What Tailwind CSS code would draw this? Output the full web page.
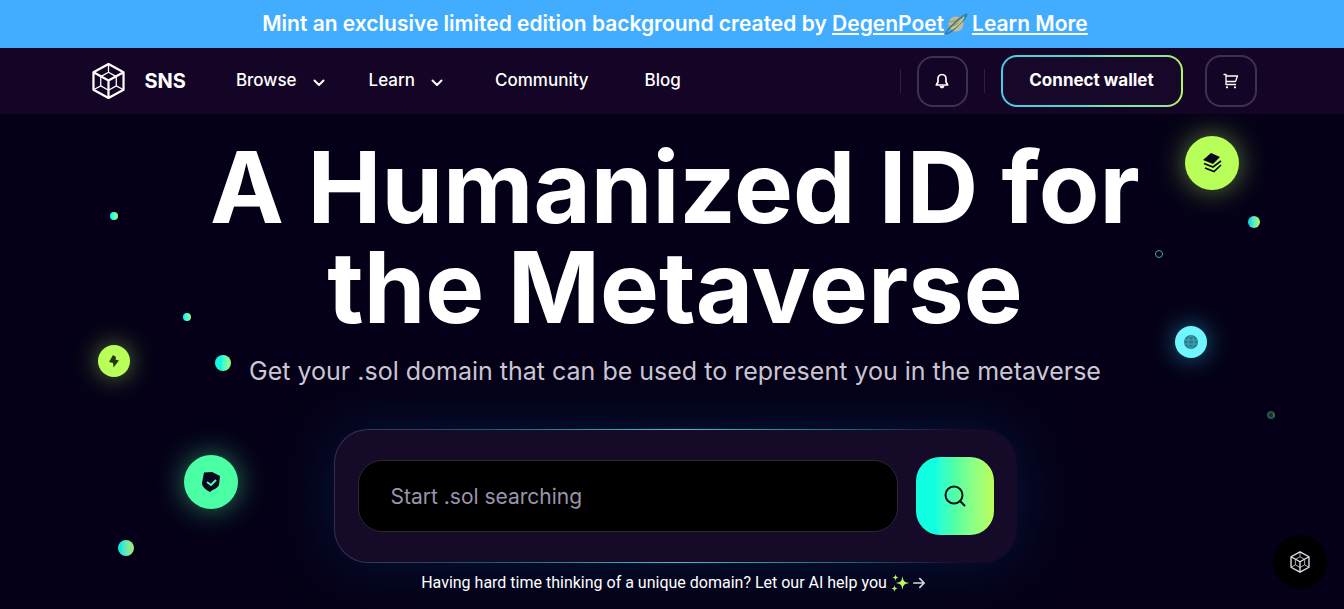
<!DOCTYPE html>
<html lang="en">
<head>
    <meta charset="UTF-8">
    <meta name="viewport" content="width=device-width, initial-scale=1.0">
    <title>SNS - A Humanized ID for the Metaverse</title>
    <script src="https://cdn.jsdelivr.net/npm/@tailwindcss/browser@4"></script>
</head>
<body class="min-h-screen flex flex-col bg-[#050017] text-white font-['Inter','Liberation_Sans',sans-serif]">
    <!-- Cube logo, shared by the header and the floating button -->
    <svg class="hidden" aria-hidden="true">
        <symbol id="cube" viewBox="0 0 34 38" fill="none" stroke="currentColor" stroke-linejoin="round">
            <path stroke-width="2.3" d="M17 1.500 32.500 10v18L17 36.500 1.500 28V10z"/>
            <path stroke-width="2.3" d="M1.500 10 17 18.500 32.500 10M17 18.500v18"/>
            <path stroke-width="1.300" d="M17 1.500V10M17 10l-8 4.500M17 10l8 4.500M9 14.500v9.500M25 14.500v9.500M9 24l-7.500 4M25 24l7.500 4M9 24l8 4.500 8-4.500"/>
        </symbol>
    </svg>

    <div class="h-12 pl-1.5 flex items-center justify-center bg-[#42adff] text-[21px] font-semibold">
        <p class="flex items-center">
            <span class="whitespace-pre">Mint an exclusive limited edition background created by </span>
            <a href="#" class="underline underline-offset-2">DegenPoet</a>
            <svg class="w-6 h-6 mr-1" viewBox="0 0 24 24" fill="none" aria-hidden="true">
                <circle cx="12" cy="12" r="7.500" fill="#c4b8a4"/>
                <path d="M5 9.500c3 1 8-1 11-4M5 14c5 0 11-3 14-6" stroke="#97a75c" stroke-width="1.500"/>
                <path d="M2 21.500C1 19 21 1 22.500 2.500S5 23.500 2 21.500z" stroke="#47707c" stroke-width="1.600"/>
                <path d="M8 17C13 14 18 9 20 5" stroke="#c7d36a" stroke-width="1.500"/>
            </svg>
            <a href="#" class="underline underline-offset-2">Learn More</a>
        </p>
    </div>

    <header class="h-[66px] pl-1 bg-[#140526]">
        <div class="h-full max-w-[1165px] mx-auto flex items-center justify-between">
            <div class="flex items-center">
                <a href="#" class="flex items-center gap-5 text-xl font-bold">
                    <svg class="w-[33px] h-[38px]"><use href="#cube"/></svg>
                    SNS
                </a>
                <nav class="ml-12.5 flex items-center text-[17px] font-medium">
                    <button class="flex items-center gap-4 mr-11">
                        Browse
                        <svg class="w-3 h-3 mt-1" viewBox="0 0 12 12" fill="none" stroke="currentColor" stroke-width="2" stroke-linecap="round" stroke-linejoin="round"><path d="m1.500 3.500 4.500 4.500 4.500-4.500"/></svg>
                    </button>
                    <button class="flex items-center gap-4 mr-13">
                        Learn
                        <svg class="w-3 h-3 mt-1" viewBox="0 0 12 12" fill="none" stroke="currentColor" stroke-width="2" stroke-linecap="round" stroke-linejoin="round"><path d="m1.500 3.500 4.500 4.500 4.500-4.500"/></svg>
                    </button>
                    <a href="#" class="mr-14">Community</a>
                    <a href="#">Blog</a>
                </nav>
            </div>
            <div class="flex items-center">
                <span class="w-px h-6 bg-[#2b2236]"></span>
                <button aria-label="Notifications" class="mx-4 w-[51px] h-[51px] flex items-center justify-center rounded-2xl border-2 border-[#3d3349]">
                    <svg class="w-4 h-4" viewBox="0 0 16 16" fill="none" stroke="currentColor" stroke-width="1.700" stroke-linejoin="round"><path d="M8 1.500c-2.600 0-4 2-4 4.300V9l-1.700 3h11.400L12 9V5.800c0-2.300-1.400-4.300-4-4.300z"/><path fill="currentColor" stroke="none" d="M5.500 13h5c-.4 1.500-1.300 2.300-2.500 2.300S5.900 14.500 5.500 13z"/></svg>
                </button>
                <span class="w-px h-6 bg-[#2b2236]"></span>
                <button class="ml-4 mr-[22px] w-[182px] h-[52px] rounded-2xl border-2 border-transparent text-[17px] font-bold [background:linear-gradient(#170829,#170829)_padding-box,linear-gradient(90deg,#4ccbe8,#45dccb_40%,#7de8a8_60%,#8fe59a_90%,#b8f65c)_border-box]">Connect wallet</button>
                <button aria-label="Cart" class="w-[52px] h-[52px] flex items-center justify-center rounded-2xl border-2 border-[#3d3349]">
                    <svg class="w-4 h-4" viewBox="0 0 16 16" fill="none" stroke="currentColor" stroke-width="1.300" stroke-linecap="round" stroke-linejoin="round"><path d="M1 1.500h2v10h9.500M3 3h11.500l-2 5.500H3"/><circle cx="4" cy="14.300" r=".5"/><circle cx="12" cy="14.300" r=".5"/></svg>
                </button>
            </div>
        </div>
    </header>

    <main class="relative grow pl-1.5 pt-[23px] pb-4 flex flex-col items-center overflow-hidden">
        <!-- Floating decorations, left -->
        <div aria-hidden="true">
            <span class="absolute left-[110px] top-[98px] size-2 rounded-full bg-linear-to-r from-[#0fe] from-20% to-[#8cfa78]"></span>
            <span class="absolute left-[183px] top-[199px] size-2 rounded-full bg-linear-to-r from-[#0fe] from-20% to-[#8cfa78]"></span>
            <span class="absolute left-[215px] top-[241px] size-4 rounded-full bg-linear-to-r from-[#0ffbe0] from-40% to-[#9bff6b]"></span>
            <span class="absolute left-[118px] top-[426px] size-4 rounded-full bg-linear-to-r from-[#12e8d8] from-20% to-[#a5e86b]"></span>
            <span class="absolute left-[98px] top-[231px] size-8 flex items-center justify-center rounded-full bg-[#b8ff5a] shadow-[0_0_24px_#b8ff5a80]">
                <svg class="w-3 h-4" viewBox="0 0 12 16" fill="#243512"><path d="M5 2 1 9l4 1 .5 4.500L11 7.500 7.500 6.500 8 4z"/></svg>
            </span>
            <span class="absolute left-[184px] top-[341px] size-[54px] flex items-center justify-center rounded-full bg-[#4bffa5] shadow-[0_0_28px_#4bffa580]">
                <svg class="w-5 h-[22px]" viewBox="0 0 20 22" fill="#0a0720"><path d="M3 1.500 11 1l8 4-1 9c-2 4-6 4-9 7-4-2-8-5-8-9z"/><path d="m6 11 4 3 5-5" fill="none" stroke="#4bffa5" stroke-width="2"/></svg>
            </span>
        </div>
        <!-- Floating decorations, right -->
        <div aria-hidden="true">
            <span class="absolute right-[105px] top-[22px] size-[54px] flex items-center justify-center rounded-full bg-[#b8ff5a] shadow-[0_0_28px_#b8ff5a80]">
                <svg class="w-5 h-5" viewBox="0 0 20 20" fill="#0a0720"><path d="M9 0l9 4-7 7-10-4z"/><path d="m2 10.500 9 3.500 8-6M3 15l9 3.500 7-6.500" fill="none" stroke="#0a0720" stroke-width="1.700"/></svg>
            </span>
            <span class="absolute right-[84px] top-[102px] size-3 rounded-full bg-linear-to-r from-[#0fdce8] from-20% to-[#a8fa50]"></span>
            <span class="absolute right-[181px] top-[136px] size-2 rounded-full border border-[#4a9fac]"></span>
            <span class="absolute right-[137px] top-[212px] size-8 flex items-center justify-center rounded-full bg-[#6ff6ff] shadow-[0_0_24px_#22c8e690]">
                <svg class="w-3.5 h-3.5" viewBox="0 0 14 14" fill="#287c8b" stroke="#4bb4c2" stroke-width=".8"><circle cx="7" cy="7" r="7" stroke="none"/><ellipse cx="7" cy="7" rx="3" ry="6"/><path d="M1 5h12M1 9h12"/></svg>
            </span>
            <span class="absolute right-[69px] top-[297px] size-2 rounded-full border-2 border-[#1b5550] border-r-[#4d6230] bg-[#123026]"></span>
        </div>

        <h1 class="text-center text-[99px] leading-[100px] font-bold">A Humanized ID for<br>the Metaverse</h1>
        <p class="mt-4 text-[25px] leading-9 text-[#cbc8d4]">Get your .sol domain that can be used to represent you in the metaverse</p>

        <form class="mt-10 w-full max-w-[683px] pl-[23px] pr-[22px] py-[27px] flex items-center gap-[18px] rounded-[34px] border border-transparent shadow-[0_0_60px_#003a7066] [background:linear-gradient(#160a29,#160a29)_padding-box,linear-gradient(90deg,#373043,#1d5a62_22%,#4dbccf_50%,#1d6a70_75%,#160a29_92%)_border-box]">
            <input type="text" aria-label="Domain name" placeholder="Start .sol searching" class="grow min-w-0 h-[72px] px-8 rounded-3xl border border-[#2b2831] bg-black text-[21px] placeholder:text-[#9c94ad] outline-none">
            <button type="button" aria-label="Search" class="size-[78px] flex items-center justify-center rounded-3xl bg-linear-to-r from-[#0fffe0] from-25% via-[#50ffa4] to-[#baff56]">
                <svg class="w-6 h-6" viewBox="0 0 24 24" fill="none" stroke="#07151a" stroke-width="2" stroke-linecap="round"><circle cx="11" cy="11" r="8.500"/><path d="m17.500 17.500 4 4"/></svg>
            </button>
        </form>

        <a href="#" class="mt-2 pr-1 flex items-center gap-1 leading-6 font-['Roboto',sans-serif]">
            Having hard time thinking of a unique domain? Let our AI help you
            <svg class="w-[18px] h-[18px]" viewBox="0 0 18 18" fill="#baf65c" aria-hidden="true"><path d="M11.500 2c.7 5 1.500 6 6.500 7-5 1-5.800 2-6.500 7-.7-5-1.500-6-6.500-7 5-1 5.800-2 6.500-7zM4.500 0c.3 2.500.8 3 3 3.500-2.200.5-2.700 1-3 3.500-.3-2.500-.8-3-3-3.500 2.200-.500 2.700-1 3-3.500zM3.500 11c.3 2.500.8 3 3 3.500-2.200.5-2.700 1-3 3.500-.3-2.500-.8-3-3-3.500 2.200-.5 2.700-1 3-3.500z"/></svg>
            <svg class="w-3 h-3" viewBox="0 0 14 14" fill="none" stroke="#d6d6de" stroke-width="2" stroke-linecap="round" stroke-linejoin="round" aria-hidden="true"><path d="M1 7h12M8 2l5 5-5 5"/></svg>
        </a>
    </main>

    <button aria-label="Open SNS menu" class="fixed right-[17px] bottom-5 size-[54px] flex items-center justify-center rounded-full bg-black">
        <svg class="w-5 h-[22px] text-[#e4e2ee]"><use href="#cube"/></svg>
    </button>
</body>
</html>
